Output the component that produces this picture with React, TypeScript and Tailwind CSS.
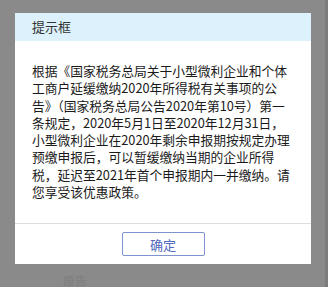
const lines = [
  "根据《国家税务总局关于小型微利企业和个体",
  "工商户延缓缴纳2020年所得税有关事项的公",
  "告》（国家税务总局公告2020年第10号）第一",
  "条规定，2020年5月1日至2020年12月31日，",
  "小型微利企业在2020年剩余申报期按规定办理",
  "预缴申报后，可以暂缓缴纳当期的企业所得",
  "税，延迟至2021年首个申报期内一并缴纳。请",
  "您享受该优惠政策。",
];

export default function App() {
  return (
    <div
      className="flex h-[287px] w-[328px] overflow-hidden bg-[#8a8a8a]"
      style={{ fontFamily: '"Noto Sans CJK SC", sans-serif' }}
    >
      <div className="flex flex-1 flex-col pl-[15px] pt-[13px]">
        <div className="flex w-[296px] flex-col bg-white">
          <div className="flex h-[28px] items-center bg-[#dcf1fb] px-[17px] text-[13px] text-[#333]">
            提示框
          </div>
          <div className="px-[17px] pb-[23px] pt-[21px] text-[12.75px] leading-[17.3px] text-[#1a1a1a]">
            {lines.map((line) => (
              <div key={line} className="whitespace-nowrap">
                {line}
              </div>
            ))}
          </div>
          <div className="flex justify-center border-t border-[#dedede] pb-[8px] pt-[8px]">
            <button className="flex h-[24px] w-[83px] items-center justify-center rounded-[2px] border border-[#7f93cf] bg-white text-[13px] text-[#5068bd]">
              确定
            </button>
          </div>
        </div>
        <div className="pl-[48px] pt-[8px] text-[12px] text-[#7d7d7d]">原告</div>
      </div>
      <div className="w-[3px] bg-[#7c7c7c]" />
    </div>
  );
}
